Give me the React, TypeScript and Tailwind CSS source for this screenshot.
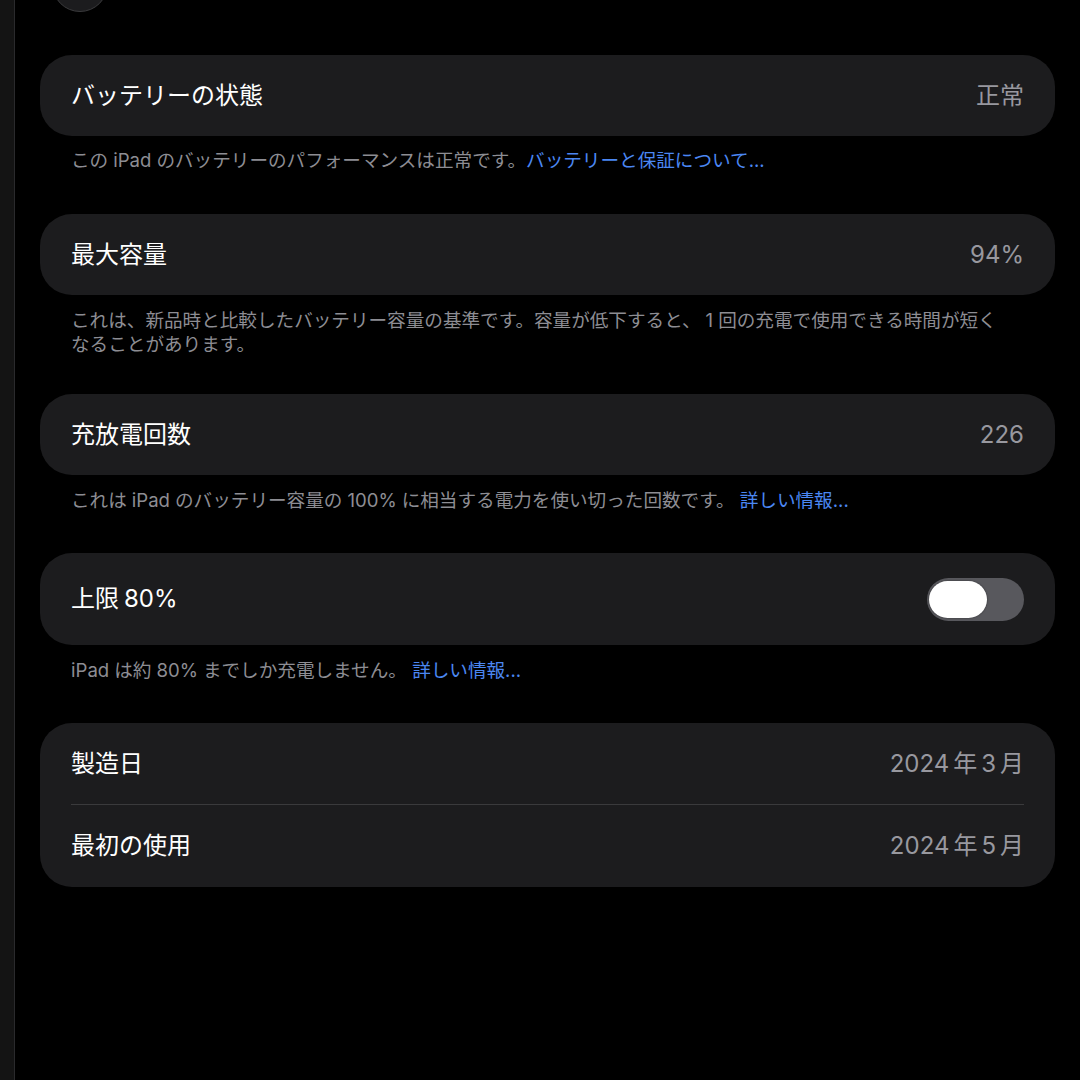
import React from "react";

const font = { fontFamily: 'Inter, "Noto Sans CJK JP", "Noto Sans", sans-serif' };

function G({ w = "w-[5px]" }: { w?: string }) {
  return <span className={"inline-block " + w} />;
}

function Card({ children, className = "" }: { children: React.ReactNode; className?: string }) {
  return <div className={"bg-[#1c1c1e] rounded-[32px] px-[31px] " + className}>{children}</div>;
}

function Row({ title, value, h = "h-[81px]" }: { title: React.ReactNode; value?: React.ReactNode; h?: string }) {
  return (
    <div className={"flex items-center justify-between " + h}>
      <span className="text-[24px] text-white leading-none">{title}</span>
      {value !== undefined && <span className="text-[24px] text-[#98989f] leading-none">{value}</span>}
    </div>
  );
}

function Note({ children, className = "" }: { children: React.ReactNode; className?: string }) {
  return (
    <p className={"px-[31px] text-[18.6px] leading-[24px] text-[#8d8d93] " + className}>{children}</p>
  );
}

function Link({ children }: { children: React.ReactNode }) {
  return <span className="text-[#4b87f2]">{children}</span>;
}

export default function App() {
  return (
    <div className="w-[1080px] h-[1080px] bg-black flex overflow-hidden" style={font}>
      <div className="w-[15px] h-full bg-[#141414] border-r border-[#2a2a2c] shrink-0" />
      <div className="flex-1 flex flex-col pl-[25px] pr-[25px]">
        <div className="w-[56px] h-[56px] rounded-full bg-[#1c1c1e] border border-[#3a3a3c] ml-[12px] -mt-[44px] shrink-0" />

        <Card className="mt-[43px]">
          <Row title="バッテリーの状態" value="正常" />
        </Card>
        <Note className="mt-[12px]">
          この<G />iPad<G />のバッテリーのパフォーマンスは正常です。<Link>バッテリーと保証について...</Link>
        </Note>

        <Card className="mt-[42px]">
          <Row title="最大容量" value="94%" />
        </Card>
        <Note className="mt-[13px]">
          これは、新品時と比較したバッテリー容量の基準です。容量が低下すると、<G />1<G />回の充電で使用できる時間が短く
          <br />
          なることがあります。
        </Note>

        <Card className="mt-[38px]">
          <Row title="充放電回数" value="226" />
        </Card>
        <Note className="mt-[13px]">
          これは<G />iPad<G />のバッテリー容量の<G />100%<G />に相当する電力を使い切った回数です。 <Link>詳しい情報...</Link>
        </Note>

        <Card className="mt-[41px]">
          <div className="flex items-center justify-between h-[92px]">
            <span className="text-[24px] text-white leading-none">
              上限<G />80%
            </span>
            <div className="w-[97px] h-[43px] rounded-full bg-[#58585d] flex items-center p-[2px]">
              <div className="w-[58px] h-[37px] rounded-full bg-white shadow-[0_0_2px_rgba(0,0,0,0.5)]" />
            </div>
          </div>
        </Card>
        <Note className="mt-[13px]">
          iPad<G />は約<G />80%<G />までしか充電しません。 <Link>詳しい情報...</Link>
        </Note>

        <Card className="mt-[41px]">
          <Row
            title="製造日"
            value={
              <>
                2024<G w="w-[4px]" />年<G w="w-[4px]" />3<G w="w-[4px]" />月
              </>
            }
          />
          <div className="h-px bg-[#3a3a3c]" />
          <Row
            title="最初の使用"
            value={
              <>
                2024<G w="w-[4px]" />年<G w="w-[4px]" />5<G w="w-[4px]" />月
              </>
            }
            h="h-[82px]"
          />
        </Card>
      </div>
    </div>
  );
}
